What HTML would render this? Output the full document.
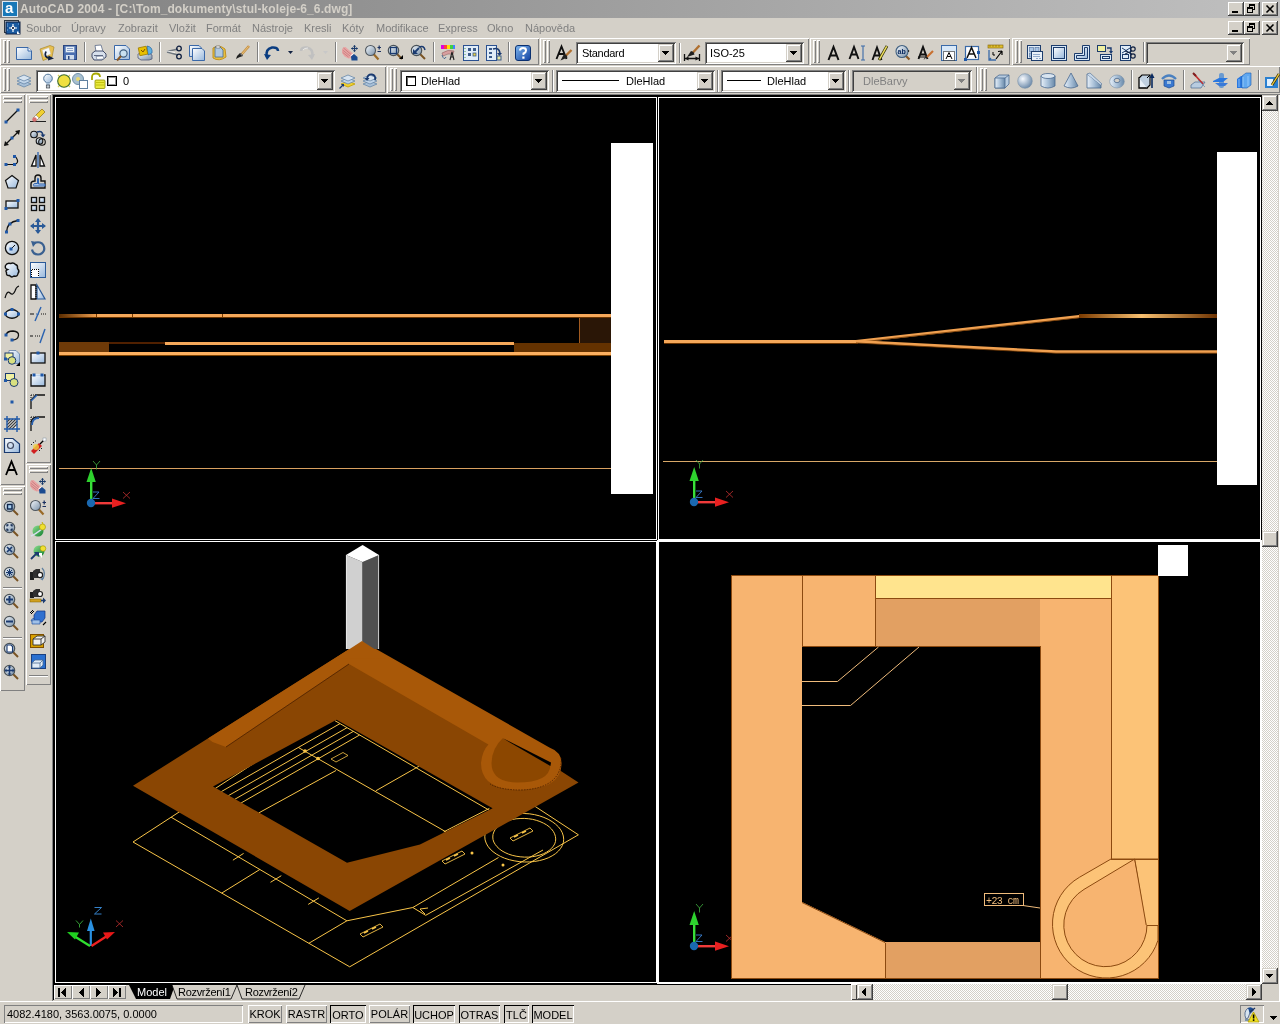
<!DOCTYPE html><html><head><meta charset="utf-8"><style>
*{margin:0;padding:0;box-sizing:border-box}
html,body{width:1280px;height:1024px;overflow:hidden;background:#d4d0c8;font-family:"Liberation Sans",sans-serif;font-size:11px;color:#000}
.a{position:absolute;will-change:transform}
svg{position:absolute;overflow:visible}
.cb{width:16px;height:14px;background:#d4d0c8;box-shadow:inset -1px -1px #404040,inset 1px 1px #fff,inset -2px -2px #808080,inset 2px 2px #d4d0c8}
.menu{top:22px;color:#808080;white-space:nowrap;line-height:13px}
.tb{background:#d4d0c8;box-shadow:inset 1px 1px #fff,inset -1px -1px #808080}
.grip{width:3px;box-shadow:inset 1px 1px #fff,inset -1px -1px #808080}
.sep{width:2px;box-shadow:inset 1px 0 #808080,inset -1px 0 #fff}
.hsep{height:2px;box-shadow:inset 0 1px #808080,inset 0 -1px #fff}
.combo{background:#fff;box-shadow:inset 1px 1px #808080,inset -1px -1px #fff,inset 2px 2px #404040,inset -2px -2px #d4d0c8;white-space:nowrap;overflow:hidden;line-height:20px}
.combo.dis{background:#d4d0c8;color:#808080}
.dd{width:16px;background:#d4d0c8;box-shadow:inset -1px -1px #404040,inset 1px 1px #d4d0c8,inset -2px -2px #808080,inset 2px 2px #fff}
.dd:after{content:"";position:absolute;left:4px;top:7px;border-left:4px solid transparent;border-right:4px solid transparent;border-top:4px solid #000}
.dd.dis:after{border-top-color:#808080}
.hgrip{height:3px;box-shadow:inset 1px 1px #fff,inset -1px -1px #808080}
.sbk{background-color:#fff;background-image:linear-gradient(45deg,#d4d0c8 25%,transparent 25%,transparent 75%,#d4d0c8 75%),linear-gradient(45deg,#d4d0c8 25%,transparent 25%,transparent 75%,#d4d0c8 75%);background-size:2px 2px;background-position:0 0,1px 1px}
.btn{background:#d4d0c8;box-shadow:inset -1px -1px #404040,inset 1px 1px #d4d0c8,inset -2px -2px #808080,inset 2px 2px #fff}
.sbtn{height:18px;top:1005px;text-align:center;line-height:18px;box-shadow:inset 1px 1px #fff,inset -1px -1px #808080;white-space:nowrap}
.sbtn.on{box-shadow:inset 1px 1px #000,inset -1px -1px #fff;line-height:20px}
</style></head><body><div class="a " style="left:0px;top:0px;width:1280px;height:18px;background:linear-gradient(to right,#808080,#c0c0c0)"></div>
<div class="a " style="left:2px;top:1px;width:16px;height:16px;background:#1878b8;border:1px solid #dfe8f0"></div>
<div class="a" style="left:5px;top:0px;color:#fff;font-weight:bold;font-size:15px;line-height:16px">a</div>
<div class="a" style="left:20px;top:2px;font-weight:bold;font-size:12px;letter-spacing:0.1px;color:#d4d0c8;white-space:nowrap;line-height:14px">AutoCAD 2004 - [C:\Tom_dokumenty\stul-koleje-6_6.dwg]</div>
<div class="a cb" style="left:1228px;top:2px;width:16px;height:14px;"></div><div class="a " style="left:1232px;top:11px;width:6px;height:2px;background:#000"></div><div class="a cb" style="left:1244px;top:2px;width:16px;height:14px;"></div><svg style="left:1244px;top:2px" width="16" height="14" shape-rendering="crispEdges"><path d="M5 2h6v2h-6zM10 4h1v4h-2v-1h1zM5 4h1v1h-1zM3 5h6v2h-6zM3 7h1v4h-1zM8 7h1v4h-1zM3 10h6v1h-6z" fill="#000"/></svg><div class="a cb" style="left:1262px;top:2px;width:16px;height:14px;"></div><svg style="left:1262px;top:2px" width="16" height="14"><path d="M4.5 3.5l7 7M11.5 3.5l-7 7" stroke="#000" stroke-width="1.6"/></svg>
<div class="a cb" style="left:1228px;top:21px;width:16px;height:14px;"></div><div class="a " style="left:1232px;top:30px;width:6px;height:2px;background:#000"></div><div class="a cb" style="left:1244px;top:21px;width:16px;height:14px;"></div><svg style="left:1244px;top:21px" width="16" height="14" shape-rendering="crispEdges"><path d="M5 2h6v2h-6zM10 4h1v4h-2v-1h1zM5 4h1v1h-1zM3 5h6v2h-6zM3 7h1v4h-1zM8 7h1v4h-1zM3 10h6v1h-6z" fill="#000"/></svg><div class="a cb" style="left:1262px;top:21px;width:16px;height:14px;"></div><svg style="left:1262px;top:21px" width="16" height="14"><path d="M4.5 3.5l7 7M11.5 3.5l-7 7" stroke="#000" stroke-width="1.6"/></svg>
<svg style="left:4px;top:20px" width="17" height="15"><rect x="0.5" y="0.5" width="14" height="12" fill="#d0d8e0" stroke="#303840"/><rect x="2" y="2" width="14" height="12" fill="#1a5aa0" stroke="#102040"/><path d="M9 4V12M5 8H13" stroke="#fff" stroke-width="1.2"/><circle cx="9" cy="8" r="1.6" fill="#102040" stroke="#fff"/><path d="M3 4h1M3 6h1M3 10h1M14 4h1M14 12h1" stroke="#80b0e0"/><path d="M13 11L16 14H13Z" fill="#fff"/></svg>
<div class="a menu" style="left:26px">Soubor</div>
<div class="a menu" style="left:71px">Úpravy</div>
<div class="a menu" style="left:118px">Zobrazit</div>
<div class="a menu" style="left:169px">Vložit</div>
<div class="a menu" style="left:206px">Formát</div>
<div class="a menu" style="left:252px">Nástroje</div>
<div class="a menu" style="left:304px">Kresli</div>
<div class="a menu" style="left:342px">Kóty</div>
<div class="a menu" style="left:376px">Modifikace</div>
<div class="a menu" style="left:438px">Express</div>
<div class="a menu" style="left:487px">Okno</div>
<div class="a menu" style="left:525px">Nápověda</div>
<div class="a " style="left:52px;top:94px;width:1228px;height:908px;background:#000;box-shadow:inset 1px 1px #808080,inset -1px -1px #fff,inset -2px -2px #d4d0c8"></div>
<div class="a tb" style="left:0px;top:38px;width:539px;height:27px;"></div><div class="a grip" style="left:3px;top:40px;width:3px;height:23px;"></div><div class="a grip" style="left:7px;top:40px;width:3px;height:23px;"></div>
<div class="a sep" style="left:84px;top:42px;width:2px;height:20px;"></div>
<div class="a sep" style="left:159px;top:42px;width:2px;height:20px;"></div>
<div class="a sep" style="left:257px;top:42px;width:2px;height:20px;"></div>
<div class="a sep" style="left:335px;top:42px;width:2px;height:20px;"></div>
<div class="a sep" style="left:433px;top:42px;width:2px;height:20px;"></div>
<div class="a sep" style="left:508px;top:42px;width:2px;height:20px;"></div>
<div class="a tb" style="left:540px;top:38px;width:269px;height:27px;"></div><div class="a grip" style="left:543px;top:40px;width:3px;height:23px;"></div><div class="a grip" style="left:547px;top:40px;width:3px;height:23px;"></div>
<div class="a combo" style="left:576px;top:42px;width:100px;height:22px;"></div><div class="a btn" style="left:658px;top:44px;width:16px;height:18px;"></div><svg style="left:662px;top:51px" width="7" height="4" shape-rendering="crispEdges"><path d="M0 0h7v1h-7zM1 1h5v1h-5zM2 2h3v1h-3zM3 3h1v1h-1z" fill="#000"/></svg>
<div class="a" style="left:582px;top:47px;white-space:nowrap;line-height:13px;letter-spacing:-0.3px">Standard</div>
<div class="a sep" style="left:679px;top:43px;width:2px;height:20px;"></div>
<div class="a combo" style="left:705px;top:42px;width:99px;height:22px;"></div><div class="a btn" style="left:786px;top:44px;width:16px;height:18px;"></div><svg style="left:790px;top:51px" width="7" height="4" shape-rendering="crispEdges"><path d="M0 0h7v1h-7zM1 1h5v1h-5zM2 2h3v1h-3zM3 3h1v1h-1z" fill="#000"/></svg>
<div class="a" style="left:710px;top:47px;white-space:nowrap;line-height:13px;">ISO-25</div>
<div class="a tb" style="left:810px;top:38px;width:200px;height:27px;"></div><div class="a grip" style="left:813px;top:40px;width:3px;height:23px;"></div><div class="a grip" style="left:817px;top:40px;width:3px;height:23px;"></div>
<div class="a tb" style="left:1012px;top:38px;width:238px;height:27px;"></div><div class="a grip" style="left:1015px;top:40px;width:3px;height:23px;"></div><div class="a grip" style="left:1019px;top:40px;width:3px;height:23px;"></div>
<div class="a sep" style="left:1143px;top:42px;width:2px;height:20px;"></div>
<div class="a combo dis" style="left:1146px;top:42px;width:98px;height:22px;"></div><div class="a btn" style="left:1226px;top:44px;width:16px;height:18px;"></div><svg style="left:1230px;top:51px" width="7" height="4" shape-rendering="crispEdges"><path d="M0 0h7v1h-7zM1 1h5v1h-5zM2 2h3v1h-3zM3 3h1v1h-1z" fill="#808080"/></svg>
<div class="a tb" style="left:0px;top:66px;width:386px;height:27px;"></div><div class="a grip" style="left:3px;top:68px;width:3px;height:23px;"></div><div class="a grip" style="left:7px;top:68px;width:3px;height:23px;"></div>
<div class="a combo" style="left:36px;top:70px;width:299px;height:22px;"></div><div class="a btn" style="left:317px;top:72px;width:16px;height:18px;"></div><svg style="left:321px;top:79px" width="7" height="4" shape-rendering="crispEdges"><path d="M0 0h7v1h-7zM1 1h5v1h-5zM2 2h3v1h-3zM3 3h1v1h-1z" fill="#000"/></svg>
<div class="a" style="left:123px;top:75px;white-space:nowrap;line-height:13px;">0</div>
<div class="a tb" style="left:387px;top:66px;width:590px;height:27px;"></div><div class="a grip" style="left:390px;top:68px;width:3px;height:23px;"></div><div class="a grip" style="left:394px;top:68px;width:3px;height:23px;"></div>
<div class="a combo" style="left:400px;top:70px;width:149px;height:22px;"></div><div class="a btn" style="left:531px;top:72px;width:16px;height:18px;"></div><svg style="left:535px;top:79px" width="7" height="4" shape-rendering="crispEdges"><path d="M0 0h7v1h-7zM1 1h5v1h-5zM2 2h3v1h-3zM3 3h1v1h-1z" fill="#000"/></svg>
<svg style="left:406px;top:76px" width="10" height="10" shape-rendering="crispEdges"><rect x="0.5" y="0.5" width="9" height="9" fill="#fff" stroke="#000"/><rect x="1" y="1" width="8" height="8" fill="none" stroke="#000" stroke-width="0.6"/></svg>
<div class="a" style="left:421px;top:75px;white-space:nowrap;line-height:13px;">DleHlad</div>
<div class="a sep" style="left:552px;top:70px;width:2px;height:22px;"></div>
<div class="a combo" style="left:556px;top:70px;width:159px;height:22px;"></div><div class="a btn" style="left:697px;top:72px;width:16px;height:18px;"></div><svg style="left:701px;top:79px" width="7" height="4" shape-rendering="crispEdges"><path d="M0 0h7v1h-7zM1 1h5v1h-5zM2 2h3v1h-3zM3 3h1v1h-1z" fill="#000"/></svg>
<div class="a " style="left:562px;top:80px;width:57px;height:1px;background:#000"></div>
<div class="a" style="left:626px;top:75px;white-space:nowrap;line-height:13px;">DleHlad</div>
<div class="a sep" style="left:717px;top:70px;width:2px;height:22px;"></div>
<div class="a combo" style="left:721px;top:70px;width:125px;height:22px;"></div><div class="a btn" style="left:828px;top:72px;width:16px;height:18px;"></div><svg style="left:832px;top:79px" width="7" height="4" shape-rendering="crispEdges"><path d="M0 0h7v1h-7zM1 1h5v1h-5zM2 2h3v1h-3zM3 3h1v1h-1z" fill="#000"/></svg>
<div class="a " style="left:727px;top:80px;width:34px;height:1px;background:#000"></div>
<div class="a" style="left:767px;top:75px;white-space:nowrap;line-height:13px;">DleHlad</div>
<div class="a sep" style="left:848px;top:70px;width:2px;height:22px;"></div>
<div class="a combo dis" style="left:852px;top:70px;width:120px;height:22px;"></div><div class="a btn" style="left:954px;top:72px;width:16px;height:18px;"></div><svg style="left:958px;top:79px" width="7" height="4" shape-rendering="crispEdges"><path d="M0 0h7v1h-7zM1 1h5v1h-5zM2 2h3v1h-3zM3 3h1v1h-1z" fill="#808080"/></svg>
<div class="a" style="left:863px;top:75px;white-space:nowrap;line-height:13px;color:#808080">DleBarvy</div>
<div class="a tb" style="left:977px;top:66px;width:303px;height:27px;"></div><div class="a grip" style="left:980px;top:68px;width:3px;height:23px;"></div><div class="a grip" style="left:984px;top:68px;width:3px;height:23px;"></div>
<div class="a sep" style="left:1131px;top:70px;width:2px;height:20px;"></div>
<div class="a sep" style="left:1183px;top:70px;width:2px;height:20px;"></div>
<div class="a sep" style="left:1258px;top:70px;width:2px;height:20px;"></div>
<div class="a tb" style="left:0px;top:94px;width:25px;height:391px;"></div><div class="a hgrip" style="left:3px;top:96px;width:19px;height:3px;"></div><div class="a hgrip" style="left:3px;top:100px;width:19px;height:3px;"></div>
<div class="a tb" style="left:0px;top:486px;width:25px;height:205px;"></div><div class="a hgrip" style="left:3px;top:488px;width:19px;height:3px;"></div><div class="a hgrip" style="left:3px;top:492px;width:19px;height:3px;"></div>
<div class="a hsep" style="left:3px;top:587px;width:19px;height:2px;"></div>
<div class="a hsep" style="left:3px;top:637px;width:19px;height:2px;"></div>
<div class="a tb" style="left:26px;top:94px;width:25px;height:369px;"></div><div class="a hgrip" style="left:29px;top:96px;width:19px;height:3px;"></div><div class="a hgrip" style="left:29px;top:100px;width:19px;height:3px;"></div>
<div class="a tb" style="left:26px;top:464px;width:25px;height:221px;"></div><div class="a hgrip" style="left:29px;top:466px;width:19px;height:3px;"></div><div class="a hgrip" style="left:29px;top:470px;width:19px;height:3px;"></div>
<div class="a hsep" style="left:29px;top:675px;width:19px;height:2px;"></div>
<div class="a " style="left:54px;top:984px;width:797px;height:16px;background:#d4d0c8;border-top:1px solid #000"></div>
<div class="a btn2" style="left:54px;top:985px;width:18px;height:14px;background:#d4d0c8;box-shadow:inset 1px 1px #fff,inset -1px -1px #808080"></div>
<div class="a btn2" style="left:72px;top:985px;width:18px;height:14px;background:#d4d0c8;box-shadow:inset 1px 1px #fff,inset -1px -1px #808080"></div>
<div class="a btn2" style="left:90px;top:985px;width:18px;height:14px;background:#d4d0c8;box-shadow:inset 1px 1px #fff,inset -1px -1px #808080"></div>
<div class="a btn2" style="left:108px;top:985px;width:18px;height:14px;background:#d4d0c8;box-shadow:inset 1px 1px #fff,inset -1px -1px #808080"></div>
<svg style="left:54px;top:985px" width="80" height="14" shape-rendering="crispEdges"><path d="M4 3h2v9h-2zM7 7h1v1h-1zM8 6h1v3h-1zM9 5h1v5h-1zM10 4h1v7h-1zM11 3h1v9h-1z" fill="#000"/><path d="M25 7h1v1h-1zM26 6h1v3h-1zM27 5h1v5h-1zM28 4h1v7h-1zM29 3h1v9h-1z" fill="#000"/><path d="M42 3h1v9h-1zM43 4h1v7h-1zM44 5h1v5h-1zM45 6h1v3h-1zM46 7h1v1h-1z" fill="#000"/><path d="M59 3h1v9h-1zM60 4h1v7h-1zM61 5h1v5h-1zM62 6h1v3h-1zM63 7h1v1h-1zM65 3h2v9h-2z" fill="#000"/></svg>
<svg style="left:0;top:984px" width="360" height="17"><path d="M129 1 L136 15 L170 15 L175 1Z" fill="#000"/><path d="M172 1 L177 15 L231 15 L237 1" fill="#d4d0c8" stroke="#000" stroke-width="0.8"/><path d="M237 1 L242 15 L299 15 L305 1" fill="#d4d0c8" stroke="#000" stroke-width="0.8"/></svg>
<div class="a" style="left:137px;top:985px;white-space:nowrap;line-height:13px;color:#fff;line-height:14px">Model</div>
<div class="a" style="left:178px;top:985px;white-space:nowrap;line-height:13px;line-height:14px;letter-spacing:-0.3px">Rozvržení1</div>
<div class="a" style="left:245px;top:985px;white-space:nowrap;line-height:13px;line-height:14px;letter-spacing:-0.3px">Rozvržení2</div>
<div class="a " style="left:851px;top:984px;width:6px;height:16px;background:#d4d0c8;box-shadow:inset 1px 1px #fff,inset -1px -1px #404040"></div>
<div class="a sbk" style="left:857px;top:984px;width:405px;height:16px;"></div>
<div class="a btn" style="left:857px;top:984px;width:16px;height:16px;"></div>
<svg style="left:862px;top:988px" width="5" height="8" shape-rendering="crispEdges"><path d="M3 0h1v8h-1zM2 1h1v6h-1zM1 2h1v4h-1zM0 3h1v2h-1z" fill="#000"/></svg>
<div class="a btn" style="left:1052px;top:984px;width:16px;height:16px;"></div>
<div class="a btn" style="left:1246px;top:984px;width:16px;height:16px;"></div>
<svg style="left:1252px;top:988px" width="5" height="8" shape-rendering="crispEdges"><path d="M0 0h1v8h-1zM1 1h1v6h-1zM2 2h1v4h-1zM3 3h1v2h-1z" fill="#000"/></svg>
<div class="a sbk" style="left:1262px;top:95px;width:16px;height:889px;"></div>
<div class="a btn" style="left:1262px;top:95px;width:16px;height:16px;"></div>
<svg style="left:1266px;top:101px" width="8" height="4" shape-rendering="crispEdges"><path d="M3 0h1v1h-1zM2 1h3v1h-3zM1 2h5v1h-5zM0 3h7v1h-7z" fill="#000"/></svg>
<div class="a btn" style="left:1262px;top:531px;width:16px;height:16px;"></div>
<div class="a btn" style="left:1262px;top:968px;width:16px;height:16px;"></div>
<svg style="left:1266px;top:974px" width="7" height="4" shape-rendering="crispEdges"><path d="M0 0h7v1h-7zM1 1h5v1h-5zM2 2h3v1h-3zM3 3h1v1h-1z" fill="#000"/></svg>
<div class="a " style="left:1262px;top:984px;width:16px;height:16px;background:#d4d0c8"></div>
<div class="a " style="left:0px;top:1001px;width:1280px;height:23px;background:#d4d0c8;border-top:1px solid #fff"></div>
<div class="a " style="left:4px;top:1005px;width:239px;height:18px;box-shadow:inset 1px 1px #808080,inset -1px -1px #fff"></div>
<div class="a" style="left:7px;top:1008px;white-space:nowrap;line-height:13px;">4082.4180, 3563.0075, 0.0000</div>
<div class="a sbtn" style="left:248px;top:1005px;width:34px;height:18px;">KROK</div>
<div class="a sbtn" style="left:286px;top:1005px;width:41px;height:18px;">RASTR</div>
<div class="a sbtn on" style="left:330px;top:1005px;width:36px;height:18px;">ORTO</div>
<div class="a sbtn" style="left:369px;top:1005px;width:41px;height:18px;">POLÁR</div>
<div class="a sbtn on" style="left:413px;top:1005px;width:42px;height:18px;">UCHOP</div>
<div class="a sbtn on" style="left:459px;top:1005px;width:41px;height:18px;">OTRAS</div>
<div class="a sbtn on" style="left:504px;top:1005px;width:25px;height:18px;">TLČ</div>
<div class="a sbtn on" style="left:532px;top:1005px;width:42px;height:18px;">MODEL</div>
<div class="a " style="left:1240px;top:1005px;width:24px;height:18px;box-shadow:inset 1px 1px #808080,inset -1px -1px #fff"></div>
<svg style="left:1243px;top:1006px" width="18" height="16"><path d="M3 13Q0 6 5 2L8 4L5 12Z" fill="#d8e4f0" stroke="#405880" stroke-width="0.8"/><path d="M5 2Q9 0 11 4L7 8Z" fill="#1a4a90"/><path d="M7 6L12 2" stroke="#1a3060" stroke-width="1.2"/><path d="M2 14H7" stroke="#6080a0" stroke-width="1.5"/><path d="M10.5 6L16 16H5Z" fill="#f0e020" stroke="#b0a000" stroke-width="0.8"/><rect x="9.8" y="8.5" width="1.6" height="4" fill="#000"/><rect x="9.8" y="13.3" width="1.6" height="1.6" fill="#000"/></svg>
<svg style="left:1270px;top:1016px" width="7" height="4" shape-rendering="crispEdges"><path d="M0 0h7v1h-7zM1 1h5v1h-5zM2 2h3v1h-3zM3 3h1v1h-1z" fill="#000"/></svg>
<svg style="left:0;top:0" width="0" height="0"><defs>
<linearGradient id="lf" x1="0" y1="0" x2="1" y2="1"><stop offset="0" stop-color="#ffffff"/><stop offset="1" stop-color="#98b8dc"/></linearGradient>
<linearGradient id="mg" x1="0" y1="0" x2="1" y2="1"><stop offset="0" stop-color="#f4f8fc"/><stop offset="1" stop-color="#7890a8"/></linearGradient>
<linearGradient id="yl" x1="0" y1="0" x2="1" y2="1"><stop offset="0" stop-color="#fff6a0"/><stop offset="1" stop-color="#d8a800"/></linearGradient>
<linearGradient id="gr" x1="0" y1="0" x2="1" y2="1"><stop offset="0" stop-color="#90e090"/><stop offset="1" stop-color="#108030"/></linearGradient>
<linearGradient id="sb" x1="0" y1="0" x2="1" y2="0"><stop offset="0" stop-color="#e8f0f8"/><stop offset="0.5" stop-color="#a8c0d8"/><stop offset="1" stop-color="#6888a8"/></linearGradient>
<linearGradient id="db" x1="0" y1="0" x2="1" y2="1"><stop offset="0" stop-color="#80b8f0"/><stop offset="1" stop-color="#1040a0"/></linearGradient>
</defs></svg>
<svg style="left:16px;top:45px" width="16" height="16"><path d="M0.5 2.5H12L15.5 6V14.5H0.5Z" fill="url(#lf)" stroke="#3a68a8"/><path d="M12 2.5V6H15.5" fill="#fff" stroke="#3a68a8"/></svg>
<svg style="left:39px;top:45px" width="16" height="16"><path d="M1 4L11 0.5L15 2L13 12L4 15.5Z" fill="#e8c050" stroke="#a88830" stroke-width="0.7"/><path d="M3 5L10 2.5L12 9L5 12Z" fill="#f4f8fc" stroke="#c8b080" stroke-width="0.5"/><path d="M7 6.5Q4.5 12 10 13" stroke="#102040" stroke-width="1.8" fill="none"/><path d="M9.5 10.5L15 13.5L9 15.5Z" fill="#102040"/></svg>
<svg style="left:62px;top:45px" width="16" height="16"><rect x="1.5" y="0.5" width="13" height="14" fill="#4a6eb0" stroke="#2a4680"/><rect x="3.5" y="1.5" width="9" height="6" fill="#e8f0f8" stroke="#6a88b8" stroke-width="0.6"/><path d="M5 3.5h6M5 5.5h6" stroke="#8aa0c8"/><rect x="4" y="10" width="8" height="4.5" fill="#d0dcec"/><rect x="6" y="11" width="1.5" height="3.5" fill="#2a4680"/></svg>
<svg style="left:91px;top:45px" width="16" height="16"><path d="M4 0.5L10 0L12 6.5H5Z" fill="#fff" stroke="#5a6a88" stroke-width="0.8"/><path d="M1 8.5L4 6H12L15 9V12L11 15H3L1 12Z" fill="#d8e0ec" stroke="#404a68"/><path d="M3 10.5H12" stroke="#404a68" stroke-width="0.8"/><path d="M5 11.5L12 11L13 14L6 14.5Z" fill="#fff" stroke="#5a6a88" stroke-width="0.6"/></svg>
<svg style="left:114px;top:45px" width="16" height="16"><path d="M0.5 0.5H12L15.5 4V14.5H0.5Z" fill="url(#lf)" stroke="#3a68a8"/><circle cx="9.5" cy="8.5" r="3.6" fill="#c8e0f0" stroke="#406080" stroke-width="1.2"/><path d="M7 11L3 15.5" stroke="#8a5a28" stroke-width="2"/></svg>
<svg style="left:137px;top:45px" width="16" height="16"><path d="M1 9L5 8H12L15 10V14L12 15H4L1 13Z" fill="url(#mg)" stroke="#505878" stroke-width="0.8"/><path d="M10 1Q16 2 15 8L11 10Z" fill="#60b0e0" stroke="#2060a0" stroke-width="0.7"/><rect x="2" y="2" width="8" height="8" fill="#e8c000" stroke="#a08000" stroke-width="0.8" transform="rotate(-12 6 6)"/><path d="M4 5l2 2l2 -3" stroke="#805000" fill="none"/></svg>
<svg style="left:166px;top:45px" width="16" height="16"><path d="M1 7L12 10M1 6.5L12 4" stroke="#707880" stroke-width="1.6"/><path d="M1 6L9 7.5" stroke="#fff" stroke-width="0.8"/><circle cx="13" cy="3.5" r="2.3" fill="none" stroke="#102040" stroke-width="1.3"/><circle cx="13" cy="11.5" r="2.3" fill="none" stroke="#102040" stroke-width="1.3"/></svg>
<svg style="left:189px;top:45px" width="16" height="16"><path d="M0.5 0.5H10L12.5 3V11.5H0.5Z" fill="url(#lf)" stroke="#3a68a8"/><path d="M3.5 3.5H13L15.5 6V15.5H3.5Z" fill="url(#lf)" stroke="#3a68a8"/></svg>
<svg style="left:211px;top:45px" width="16" height="16"><path d="M2 3Q8 -1 14 4L15 12Q8 17 2 13Z" fill="#e8c040" stroke="#c09020"/><path d="M4 2H9L12 5V12H4Z" fill="#b0c8e0" stroke="#4a6a90" stroke-width="0.8"/><path d="M5 1h4v2h-4z" fill="#fff" stroke="#606060" stroke-width="0.6"/></svg>
<svg style="left:234px;top:45px" width="16" height="16"><path d="M15 1L7 10" stroke="#c89040" stroke-width="2.6"/><path d="M14.5 1.5L8 9" stroke="#f0d090" stroke-width="0.8"/><path d="M8 9L6 8Q3 10 2 14Q5 12 9 11Z" fill="#202020"/><path d="M6.5 8.5L8.5 10.5" stroke="#808080" stroke-width="1.3"/></svg>
<svg style="left:264px;top:45px" width="16" height="16"><path d="M3 12Q1 4 8 2.5Q14 2 14 6" stroke="#0a3c80" stroke-width="2.6" fill="none"/><path d="M0 9L3 15L7 10Z" fill="#0a3c80"/></svg>
<svg style="left:285px;top:45px" width="16" height="16"><path d="M3 6h5l-2.5 3z" fill="#102040"/></svg>
<svg style="left:299px;top:45px" width="16" height="16"><path d="M13 12Q15 4 8 2.5Q2 2 2 6" stroke="#c0c0c0" stroke-width="2.6" fill="none"/><path d="M16 9L13 15L9 10Z" fill="#c0c0c0"/><path d="M4 5Q5 3 9 3" stroke="#e8e8e8" fill="none"/></svg>
<svg style="left:320px;top:45px" width="16" height="16"><path d="M3 6h5l-2.5 3z" fill="#c8c8c8"/></svg>
<svg style="left:342px;top:45px" width="16" height="16"><path d="M0 4.5Q0.5 1.5 3.5 2L11 8.5L10 13L6.5 13.5Q2 12 0 8Z" fill="#e8a4a4"/><path d="M1.5 3L9 9.5M0.8 5.2L8 11M0.8 7.5L6.5 12" stroke="#c47878" stroke-width="0.8"/><path d="M9 11.5L12 9L15.5 12V15.5H9.5Z" fill="#1a4a90"/><path d="M8.5 11L11.5 8.5" stroke="#fff" stroke-width="1"/><path d="M12.5 0.5V6.5M9.5 3.5H15.5" stroke="#1a3a6a" stroke-width="1.2"/><path d="M11 1.8L12.5 0L14 1.8ZM11 5.2L12.5 7L14 5.2ZM10.8 2L9 3.5L10.8 5ZM14.2 2L16 3.5L14.2 5Z" fill="#1a3a6a"/></svg>
<svg style="left:365px;top:45px" width="16" height="16"><path d="M8.5 9L13.5 14.5" stroke="#9a6a28" stroke-width="2.2"/><circle cx="5.5" cy="5.5" r="5" fill="url(#mg)" stroke="#505860" stroke-width="1.1"/><path d="M12.5 2.5H16M14.2 0.5V4.5M12.5 6.5H16" stroke="#1a3060" stroke-width="1.2"/></svg>
<svg style="left:388px;top:45px" width="16" height="16"><path d="M9 9L14 14" stroke="#7a5424" stroke-width="2"/><circle cx="5.5" cy="5.5" r="5.2" fill="url(#mg)" stroke="#4a5258" stroke-width="1.2"/><g transform="translate(-1,-1)"><rect x="3.5" y="3.5" width="6" height="6" fill="none" stroke="#1a3a70" stroke-width="1.2"/><path d="M12 15h4v-4z" fill="#000"/></g></svg>
<svg style="left:411px;top:45px" width="16" height="16"><path d="M9 9L14 14" stroke="#7a5424" stroke-width="2"/><circle cx="5.5" cy="5.5" r="5.2" fill="url(#mg)" stroke="#4a5258" stroke-width="1.2"/><g transform="translate(-1,-1)"><path d="M9 4L4 9" stroke="#1a3a70" stroke-width="1.8"/><path d="M3 5V10H8Z" fill="#1a3a70"/><path d="M9 3Q14 1 15 6" stroke="#1a3a70" stroke-width="1.5" fill="none"/></g></svg>
<svg style="left:440px;top:45px" width="16" height="16"><rect x="1" y="0" width="14" height="4" fill="url(#rb)"/><path d="M1 0h3v4h-3z" fill="#e000e0"/><path d="M4 0h3v4h-3z" fill="#ff4040"/><path d="M7 0h3v4h-3z" fill="#ffe000"/><path d="M10 0h3v4h-3z" fill="#40d040"/><path d="M13 0h2v4h-2z" fill="#4080ff"/><path d="M2 8Q8 4 14 6L13 9Q8 8 3 11Z" fill="#d8a0a0" stroke="#906060" stroke-width="0.6"/><path d="M2 10Q4 16 6 12" stroke="#4a6a90" fill="none"/><path d="M10 15L12 7L14 15M11 12H13" stroke="#202020" fill="none" stroke-width="1.1"/></svg>
<svg style="left:463px;top:45px" width="16" height="16"><rect x="0.5" y="0.5" width="15" height="15" fill="#e0ecf8" stroke="#2a5090"/><path d="M2 3v1M2 6v1M2 9v1M2 12v1" stroke="#50a050"/><rect x="5" y="3" width="3" height="3" fill="#3a5a8a"/><rect x="10" y="3" width="3" height="3" fill="#3a5a8a"/><rect x="5" y="8" width="3" height="3" fill="#3a5a8a"/><rect x="10" y="8" width="3" height="3" fill="#e8d040" stroke="#3a5a8a" stroke-width="0.8"/></svg>
<svg style="left:486px;top:45px" width="16" height="16"><rect x="0.5" y="0.5" width="10" height="15" fill="#e0ecf8" stroke="#2a5090"/><path d="M3 3h3v2h-3zM3 7h3v2h-3zM3 11h3v2h-3z" fill="#3a5a8a"/><path d="M7 4Q13 2 14 8" stroke="#1a3a70" stroke-width="1.6" fill="none"/><path d="M11 8h5l-2.5 3z" fill="#1a3a70"/><rect x="11" y="11" width="4" height="4" fill="#e8e8a0" stroke="#3a5a8a"/></svg>
<svg style="left:515px;top:45px" width="16" height="16"><rect x="0.5" y="0.5" width="15" height="15" rx="2.5" fill="url(#db)" stroke="#0a3070"/><path d="M5 5.5Q5 3 8 3Q11 3 11 5.5Q11 7.5 8.5 8.5V10" stroke="#fff" stroke-width="2" fill="none"/><rect x="7.3" y="11.5" width="2.2" height="2.2" fill="#fff"/></svg>
<svg style="left:556px;top:45px" width="16" height="16"><path d="M0.5 14L5.5 1.5L10.5 14M2.5 9H8.5" stroke="#101010" stroke-width="1.9" fill="none"/><path d="M15.5 5L10 10.5" stroke="#b07030" stroke-width="2.4"/><path d="M10.5 10L8 9L4.5 15.5L11.5 12.5Z" fill="#202020"/></svg>
<svg style="left:684px;top:45px" width="16" height="16"><path d="M0.5 9V16M15.5 9V16M1 13.5H15" stroke="#101010" stroke-width="1.3"/><path d="M1 13.5L4.5 11.5V15.5ZM15 13.5L11.5 11.5V15.5Z" fill="#101010"/><path d="M15.5 0.5L9 7.5" stroke="#b07030" stroke-width="2.4"/><path d="M9.5 7L7 6L3 12L10.5 9.5Z" fill="#202020"/></svg>
<svg style="left:826px;top:45px" width="16" height="16"><path d="M2.5 15L7.5 2L12.5 15M4.5 10.5H10.5" stroke="#101010" stroke-width="2" fill="none"/></svg>
<svg style="left:849px;top:45px" width="16" height="16"><path d="M0.5 14L5 2L9.5 14M2.5 9.5H7.5" stroke="#101010" stroke-width="1.9" fill="none"/><path d="M12 1H16M12 15H16M14 1V15" stroke="#3a6aa8" stroke-width="1.1"/></svg>
<svg style="left:872px;top:45px" width="16" height="16"><path d="M0.5 15L5 2.5L9.5 15M2.5 10.5H7.5" stroke="#101010" stroke-width="1.9" fill="none"/><path d="M15 1L7 15" stroke="#303000" stroke-width="2.8"/><path d="M14.7 1.3L7.4 14.5" stroke="#f0e060" stroke-width="1.5"/></svg>
<svg style="left:895px;top:45px" width="16" height="16"><path d="M10 10L14.5 14.5" stroke="#8a5a28" stroke-width="2.2"/><circle cx="7" cy="6.5" r="6" fill="url(#mg)" stroke="#406080" stroke-width="1.1"/><text x="2.5" y="9" font-family="Liberation Sans" font-size="7" fill="#0a2a60" font-weight="bold">ab</text><path d="M14 5Q12.5 6 14 7" stroke="#202020" fill="none"/></svg>
<svg style="left:918px;top:45px" width="16" height="16"><path d="M0.5 14L5 2L9.5 14M2.5 9.5H7.5" stroke="#101010" stroke-width="1.9" fill="none"/><path d="M0 12H8" stroke="#101010"/><path d="M15 6L9 12" stroke="#c87030" stroke-width="2.2"/><path d="M9 12L5.5 15L7.5 11Z" fill="#303030"/></svg>
<svg style="left:941px;top:45px" width="16" height="16"><rect x="0.5" y="0.5" width="15" height="15" fill="#d8e8f8" stroke="#3a6aa8"/><rect x="2.5" y="6.5" width="11" height="9" fill="#fff" stroke="#000" stroke-dasharray="1 1"/><path d="M5 14L8 7.5L11 14M6.2 11.5H9.8" stroke="#000" fill="none"/></svg>
<svg style="left:964px;top:45px" width="16" height="16"><rect x="1.5" y="1.5" width="13" height="13" fill="#fff" stroke="#3a6aa8" stroke-width="1.2"/><path d="M3 13L7.5 2.5L12 13M5 9H10" stroke="#101010" stroke-width="1.5" fill="none"/><rect x="13" y="6" width="3" height="3" fill="#1f58a8"/><rect x="0" y="13" width="3" height="3" fill="#1f58a8"/></svg>
<svg style="left:987px;top:45px" width="16" height="16"><rect x="1" y="0" width="15" height="3" fill="#e0c030" stroke="#806000" stroke-width="0.6"/><path d="M3 0v2M6 0v2M9 0v2M12 0v2" stroke="#806000" stroke-width="0.6"/><path d="M2 5V15H9M2 15L4 13" stroke="#3a6aa8" stroke-width="1.3" fill="none"/><path d="M6 7V10H8" stroke="#000" fill="none"/><path d="M9 14L15 6M15 6L15 10M15 6L11 6.5" stroke="#000" stroke-width="1.2" fill="none"/></svg>
<svg style="left:1027px;top:45px" width="16" height="16"><rect x="0.5" y="0.5" width="13" height="13" fill="#e0ecf8" stroke="#1c3c6c"/><rect x="2.5" y="2.5" width="4" height="4" fill="#a8c4e4" stroke="#4a6a98" stroke-width="0.6"/><rect x="8" y="2.5" width="4" height="4" fill="#a8c4e4" stroke="#4a6a98" stroke-width="0.6"/><rect x="2.5" y="8" width="4" height="4" fill="#a8c4e4" stroke="#4a6a98" stroke-width="0.6"/><rect x="4.5" y="6.5" width="11" height="9" fill="#e8f0f8" stroke="#1c3c6c"/><path d="M6 9.5h7M6 11.5h7M9 13.5h2M12 13.5h2" stroke="#7a98c0" stroke-width="0.8"/></svg>
<svg style="left:1051px;top:45px" width="16" height="16"><rect x="0.5" y="0.5" width="15" height="15" fill="#d8e8f8" stroke="#1c3c6c"/><rect x="2.5" y="2.5" width="11" height="11" fill="url(#lf)" stroke="#1c3c6c"/></svg>
<svg style="left:1074px;top:45px" width="16" height="16"><path d="M8.5 0.5H15.5V15.5H0.5V8.5H8.5Z" fill="#d8e8f8" stroke="#1c3c6c"/><path d="M10.5 2.5H13.5V13.5H2.5V10.5H10.5Z" fill="url(#lf)" stroke="#1c3c6c"/></svg>
<svg style="left:1097px;top:45px" width="16" height="16"><rect x="0.5" y="0.5" width="8" height="6" fill="#f0f0a0" stroke="#1c3c6c"/><rect x="3.5" y="9.5" width="11" height="6" fill="#e0ecf8" stroke="#1c3c6c"/><rect x="5.5" y="11.5" width="7" height="2" fill="none" stroke="#1c3c6c"/><path d="M10 3H14V7" stroke="#1a3a70" stroke-width="1.4" fill="none"/><path d="M12 6h4l-2 3z" fill="#1a3a70"/></svg>
<svg style="left:1120px;top:45px" width="16" height="16"><rect x="0.5" y="0.5" width="10" height="15" fill="#e0ecf8" stroke="#1c3c6c"/><rect x="2.5" y="9.5" width="6" height="4" fill="none" stroke="#1c3c6c"/><path d="M2 3L10 8M2 8L10 3" stroke="#1c3c6c"/><circle cx="13" cy="4" r="2.2" fill="none" stroke="#102040" stroke-width="1.2"/><circle cx="13" cy="11" r="2.2" fill="none" stroke="#102040" stroke-width="1.2"/><path d="M5 6L12 9M5 9L12 6" stroke="#102040"/></svg>
<svg style="left:16px;top:73px" width="16" height="16"><path d="M1 11L8 14L15 11L8 8Z" fill="#a8c0d8" stroke="#6888a8" stroke-width="0.8"/><path d="M1 8L8 11L15 8L8 5Z" fill="#c0d4e8" stroke="#6888a8" stroke-width="0.8"/><path d="M1 5L8 8L15 5L8 2Z" fill="#d8e4f0" stroke="#6888a8" stroke-width="0.8"/></svg>
<svg style="left:339px;top:73px" width="16" height="16"><path d="M2 11L9 14L16 11L9 8Z" fill="#f0d030" stroke="#c0a000" stroke-width="0.8"/><path d="M2 8L9 11L16 8L9 5Z" fill="#c0d4e8" stroke="#6888a8" stroke-width="0.8"/><path d="M2 5L9 8L16 5L9 2Z" fill="#d8e4f0" stroke="#6888a8" stroke-width="0.8"/><path d="M0.5 15.5L4 12" stroke="#1a3a70" stroke-width="1.3"/><path d="M2 11H5V14Z" fill="#1a3a70"/></svg>
<svg style="left:362px;top:73px" width="16" height="16"><path d="M1 11L8 14L15 11L8 8Z" fill="#a8c0d8" stroke="#6888a8" stroke-width="0.8"/><path d="M1 8L8 11L15 8L8 5Z" fill="#c0d4e8" stroke="#6888a8" stroke-width="0.8"/><path d="M1 5L8 8L15 5L8 2Z" fill="#d8e4f0" stroke="#6888a8" stroke-width="0.8"/><path d="M5 7Q5 1 10 1.5Q14 2 13 7" stroke="#1a3a70" stroke-width="1.8" fill="none"/><path d="M2.5 5H7.5L5 8Z" fill="#1a3a70"/></svg>
<svg style="left:994px;top:73px" width="16" height="16"><path d="M1 5L5 2H15V11L11 15H1Z" fill="#b8cce0" stroke="#4a6a90" stroke-width="0.8"/><path d="M1 5H11V15H1Z" fill="url(#sb)" stroke="#4a6a90" stroke-width="0.8"/><path d="M11 5L15 2" stroke="#4a6a90" stroke-width="0.8"/></svg>
<svg style="left:1017px;top:73px" width="16" height="16"><radialGradient id="sph" cx="0.35" cy="0.35" r="0.7"><stop offset="0" stop-color="#f8fbff"/><stop offset="1" stop-color="#6a88a8"/></radialGradient><circle cx="8" cy="8" r="7.3" fill="url(#sph)" stroke="#7890a8" stroke-width="0.6"/></svg>
<svg style="left:1040px;top:73px" width="16" height="16"><path d="M1 3V13Q8 17 15 13V3" fill="url(#sb)" stroke="#4a6a90" stroke-width="0.8"/><ellipse cx="8" cy="3" rx="7" ry="2.5" fill="#d8e4f0" stroke="#4a6a90" stroke-width="0.8"/></svg>
<svg style="left:1063px;top:73px" width="16" height="16"><path d="M8 0L1 13Q8 17 15 13Z" fill="url(#sb)" stroke="#4a6a90" stroke-width="0.8"/></svg>
<svg style="left:1086px;top:73px" width="16" height="16"><path d="M1 1L15 12V15H1Z" fill="url(#sb)" stroke="#4a6a90" stroke-width="0.8"/><path d="M1 1L4 0L16 11L15 12" fill="#c8d8e8" stroke="#4a6a90" stroke-width="0.6"/></svg>
<svg style="left:1109px;top:73px" width="16" height="16"><ellipse cx="8" cy="8.5" rx="7.3" ry="6.5" fill="url(#sb)" stroke="#7890a8" stroke-width="0.6"/><ellipse cx="8" cy="7.5" rx="2.8" ry="2.2" fill="#d4d0c8" stroke="#4a6a90" stroke-width="0.8"/></svg>
<svg style="left:1138px;top:73px" width="16" height="16"><path d="M1 5H9V15H1Z" fill="#e8f0f8" stroke="#000" stroke-width="1.3"/><path d="M1 5L4 2H12V12L9 15" fill="#c0d0e0" stroke="#000" stroke-width="1.1"/><path d="M9 5L12 2" stroke="#000"/><path d="M14 15V3" stroke="#0a2a60" stroke-width="1.6"/><path d="M11.5 5L14 0L16.5 5Z" fill="#0a2a60"/></svg>
<svg style="left:1161px;top:73px" width="16" height="16"><path d="M1 6Q8 -1 15 6" stroke="#4a80c0" stroke-width="2.4" fill="none"/><path d="M3 7H13V13L8 15L3 13Z" fill="#3a78d0" stroke="#1a4a90" stroke-width="0.7"/><rect x="6" y="8" width="4" height="3" fill="#a0c0e0"/></svg>
<svg style="left:1190px;top:73px" width="16" height="16"><path d="M1 12L5 9H15L11 15H1Z" fill="#b8cce0" stroke="#4a6a90" stroke-width="0.7"/><path d="M4 1L13 11" stroke="#c03030" stroke-width="1.8"/><path d="M3 0L6 3" stroke="#802020" stroke-width="2"/><path d="M8 7L15 14" stroke="#6a8ab0" stroke-width="0.8"/></svg>
<svg style="left:1213px;top:73px" width="16" height="16"><rect x="6" y="0" width="5" height="15" rx="2" fill="#6a9ad0"/><path d="M0 8L6 5H15L10 9H0Z" fill="#2a78e0"/><path d="M2 10L6 13H12L15 10" fill="#3a7ad8"/></svg>
<svg style="left:1236px;top:73px" width="16" height="16"><path d="M1 6L5 3H9V15H1Z" fill="#2a78e0"/><path d="M6 3L10 0H15V12L11 15H6Z" fill="#60a8f0" stroke="#1a58b0" stroke-width="0.6"/><path d="M3 6v8M7 4v10M12 3v10" stroke="#a0d0ff" stroke-width="0.8"/></svg>
<svg style="left:1264px;top:73px" width="16" height="16"><rect x="1" y="4" width="13" height="11" fill="#2a80d0"/><rect x="3" y="6" width="6" height="7" fill="#e0f0ff"/><path d="M15 1L8 12" stroke="#403000" stroke-width="2.6"/><path d="M15 1L8 12" stroke="#f0d040" stroke-width="1.3"/></svg>
<svg style="left:42px;top:73px" width="16" height="16"><circle cx="6" cy="5.5" r="4.3" fill="url(#lf)" stroke="#406890" stroke-width="0.9"/><path d="M4 9.5L4.5 12H7.5L8 9.5Z" fill="#a8c0d8"/><rect x="4.3" y="12" width="3.4" height="3" fill="#c0c8d0" stroke="#404850" stroke-width="0.7"/></svg>
<svg style="left:56px;top:73px" width="16" height="16"><path d="M2 2l2 2M14 2l-2 2M2 14l2 -2M14 14l-2 -2" stroke="#d8d060" stroke-width="1.3"/><circle cx="8" cy="8" r="6.3" fill="#f0e040" stroke="#3a6a30" stroke-width="1.1"/></svg>
<svg style="left:72px;top:73px" width="16" height="16"><circle cx="6" cy="6" r="5.5" fill="#a8c0d0" stroke="#7090a8"/><circle cx="6" cy="6" r="2" fill="#e8d870"/><rect x="7.5" y="7.5" width="8" height="8" fill="#fff" stroke="#6080a0"/></svg>
<svg style="left:90px;top:73px" width="16" height="16"><path d="M2 7V4Q2 0.5 6 0.5Q10 0.5 10 4" stroke="#a8a800" stroke-width="1.8" fill="none"/><rect x="5" y="7" width="10" height="8.5" rx="1" fill="#e8e840" stroke="#909000" stroke-width="0.8"/><path d="M6 9.5h8M6 12h8" stroke="#b8b800" stroke-width="0.8"/></svg>
<svg style="left:107px;top:76px" width="10" height="10" shape-rendering="crispEdges"><rect x="0.5" y="0.5" width="9" height="9" fill="#fff" stroke="#000"/><rect x="1.5" y="1.5" width="7" height="7" fill="none" stroke="#000" stroke-width="0.4"/></svg>
<svg style="left:4px;top:108px" width="16" height="16"><path d="M2 14L14 2" stroke="#101010" stroke-width="1.3"/><rect x="0.5" y="12.5" width="3" height="3" fill="#1f58a8"/><rect x="12.5" y="0.5" width="3" height="3" fill="#1f58a8"/></svg>
<svg style="left:4px;top:130px" width="16" height="16"><path d="M1 15L15 1" stroke="#101010" stroke-width="1.3"/><path d="M0 16L1 11L5 15Z" fill="#101010"/><path d="M16 0L15 5L11 1Z" fill="#101010"/><rect x="6.5" y="6.5" width="3" height="3" fill="#1f58a8"/></svg>
<svg style="left:4px;top:152px" width="16" height="16"><path d="M2 12.5H10.5Q15 11 13 7Q12 4.5 10.5 4.5" stroke="#101010" stroke-width="1.2" fill="none"/><rect x="0.5" y="11.0" width="3" height="3" fill="#1f58a8"/><rect x="9.0" y="11.0" width="3" height="3" fill="#1f58a8"/><rect x="9.0" y="3.0" width="3" height="3" fill="#1f58a8"/></svg>
<svg style="left:4px;top:174px" width="16" height="16"><path d="M8 1.5L14.5 6.5L12 14H4L1.5 6.5Z" fill="url(#lf)" stroke="#101010" stroke-width="1.2"/></svg>
<svg style="left:4px;top:196px" width="16" height="16"><rect x="2" y="5" width="12" height="7" fill="url(#lf)" stroke="#101010" stroke-width="1.3"/><rect x="12.5" y="3.0" width="3" height="3" fill="#1f58a8"/><rect x="0.5" y="11.0" width="3" height="3" fill="#1f58a8"/></svg>
<svg style="left:4px;top:218px" width="16" height="16"><path d="M2.5 14Q3 4 14 2.5" stroke="#101010" stroke-width="1.3" fill="none"/><rect x="1.0" y="12.5" width="3" height="3" fill="#1f58a8"/><rect x="4.5" y="4.5" width="3" height="3" fill="#1f58a8"/><rect x="12.5" y="1.0" width="3" height="3" fill="#1f58a8"/></svg>
<svg style="left:4px;top:240px" width="16" height="16"><circle cx="8" cy="8" r="6.6" fill="url(#lf)" stroke="#101010" stroke-width="1.3"/><path d="M7 9L11 5" stroke="#101010"/><rect x="5.5" y="7.5" width="3" height="3" fill="#1f58a8"/></svg>
<svg style="left:4px;top:262px" width="16" height="16"><path d="M3.5 7.5Q0.5 6.5 1.5 3.5Q3 0.5 6.5 1.5Q9.5 0 11.5 2.5Q14 3 13.5 6.5Q16 9 14 11.5Q13.5 15 10 14Q7.5 16 5.5 13.5Q2 14 2.5 10.5Q1 8.5 3.5 7.5Z" fill="url(#lf)" stroke="#101010" stroke-width="1.4"/></svg>
<svg style="left:4px;top:284px" width="16" height="16"><path d="M1 14Q3 6 6 9Q9 12 11 7Q12 3 15 2" stroke="#101010" stroke-width="1.2" fill="none"/></svg>
<svg style="left:4px;top:306px" width="16" height="16"><ellipse cx="8" cy="8" rx="6.5" ry="4.2" fill="url(#lf)" stroke="#101010" stroke-width="1.4"/><rect x="6.5" y="2.0" width="3" height="3" fill="#1f58a8"/><rect x="0.0" y="6.5" width="3" height="3" fill="#1f58a8"/><rect x="13.0" y="6.5" width="3" height="3" fill="#1f58a8"/></svg>
<svg style="left:4px;top:328px" width="16" height="16"><path d="M2 7Q3 3 9 3Q15 3.5 14.5 7.5Q14 12 8 12" stroke="#101010" stroke-width="1.3" fill="none"/><rect x="0.5" y="5.5" width="3" height="3" fill="#1f58a8"/><rect x="6.5" y="10.5" width="3" height="3" fill="#1f58a8"/></svg>
<svg style="left:4px;top:350px" width="16" height="16"><path d="M5 0.5H12L15.5 4V13.5H5Z" fill="url(#lf)" stroke="#6080a8" stroke-width="0.8"/><rect x="1" y="3" width="8" height="6" fill="#f0f0a0" stroke="#1a3a70"/><circle cx="8" cy="10.5" r="3.8" fill="#d8e080" stroke="#1a3a70"/><path d="M16 12V16H12Z" fill="#000"/><rect x="0.0" y="7.5" width="3" height="3" fill="#1f58a8"/></svg>
<svg style="left:4px;top:372px" width="16" height="16"><rect x="1.5" y="1.5" width="9" height="7" fill="#f0f0a0" stroke="#1a3a70"/><circle cx="10" cy="10.5" r="4" fill="#d8e080" stroke="#1a3a70"/><rect x="0.0" y="7.0" width="3" height="3" fill="#1f58a8"/></svg>
<svg style="left:4px;top:394px" width="16" height="16"><rect x="6.5" y="6.5" width="3" height="3" fill="#1f58a8"/></svg>
<svg style="left:4px;top:416px" width="16" height="16"><rect x="3" y="3" width="10" height="10" fill="#fff"/><path d="M3 6L6 3M3 9L9 3M3 12L12 3M5 13L13 5M8 13L13 8" stroke="#404040" stroke-width="1.3"/><path d="M0 3H16M0 13H16M3 0V16M13 0V16" stroke="#1f58a8" stroke-width="1.4"/></svg>
<svg style="left:4px;top:438px" width="16" height="16"><path d="M0.5 0.5H9L15.5 6V14.5H0.5Z" fill="url(#lf)" stroke="#1a3a70" stroke-width="1.2"/><circle cx="6.5" cy="7.5" r="3" fill="none" stroke="#404860" stroke-width="1.2"/></svg>
<svg style="left:4px;top:460px" width="16" height="16"><path d="M2 15L7.5 1.5L13 15M4.5 10H10.5" stroke="#000" stroke-width="1.8" fill="none"/></svg>
<svg style="left:30px;top:108px" width="16" height="16"><path d="M0 13.5H16" stroke="#202020"/><path d="M3 10L12 1L15 4L6 13Z" fill="#f0d030" stroke="#806000" stroke-width="0.6"/><path d="M3 10L6 7L9 10L6 13Z" fill="#fff" stroke="#808080" stroke-width="0.5"/><circle cx="4.5" cy="11.5" r="2.2" fill="#d87070"/></svg>
<svg style="left:30px;top:130px" width="16" height="16"><circle cx="4" cy="4.5" r="3.3" fill="url(#mg)" stroke="#101010" stroke-width="1.1"/><circle cx="9.5" cy="11" r="3.3" fill="url(#mg)" stroke="#101010" stroke-width="1.1"/><circle cx="12" cy="12" r="3.3" fill="none" stroke="#101010" stroke-width="1.1"/><path d="M7 2Q12 0 13 5" stroke="#1a3a70" stroke-width="1.5" fill="none"/><path d="M10.5 4.5H15.5L13 7.5Z" fill="#1a3a70"/></svg>
<svg style="left:30px;top:152px" width="16" height="16"><path d="M6 3L1.5 14H6Z" fill="#fff" stroke="#101010" stroke-width="1.3"/><path d="M10 3L14.5 14H10Z" fill="#fff" stroke="#101010" stroke-width="1.3"/><path d="M8 0V16" stroke="#2a62b0" stroke-width="1.3"/></svg>
<svg style="left:30px;top:174px" width="16" height="16"><path d="M1 14V10Q1 7 5 7V4Q5 1 8 1Q11 1 11 4V7H15V14Z" fill="none" stroke="#101010" stroke-width="1.4"/><path d="M3.5 11.5V10.5Q3.5 9.5 6 9.5H7.5V4.5Q7.5 3.5 8.5 4.5V10H15V12H3.5" fill="#b0c8e8" stroke="#2a62b0"/></svg>
<svg style="left:30px;top:196px" width="16" height="16"><rect x="1.5" y="1.5" width="5" height="5" fill="url(#lf)" stroke="#101010" stroke-width="1.3"/><rect x="9.5" y="1.5" width="5" height="5" fill="url(#lf)" stroke="#101010" stroke-width="1.3"/><rect x="1.5" y="9.5" width="5" height="5" fill="url(#lf)" stroke="#101010" stroke-width="1.3"/><rect x="9.5" y="9.5" width="5" height="5" fill="url(#lf)" stroke="#101010" stroke-width="1.3"/></svg>
<svg style="left:30px;top:218px" width="16" height="16"><path d="M8 1V15M1 8H15" stroke="#2a5a98" stroke-width="2.2"/><path d="M8 0L11 4H5ZM8 16L11 12H5ZM0 8L4 5V11ZM16 8L12 5V11Z" fill="#2a5a98"/></svg>
<svg style="left:30px;top:240px" width="16" height="16"><path d="M4 3.5Q8 1 12 3.5Q15 6.5 14 10.5Q12 14.5 8 14.5Q3 14.5 2 9.5" stroke="#3a6090" stroke-width="2.2" fill="none"/><path d="M1 1L7 2L3 7Z" fill="#3a6090"/></svg>
<svg style="left:30px;top:262px" width="16" height="16"><rect x="0.5" y="0.5" width="15" height="15" fill="url(#lf)" stroke="#2a5a98"/><rect x="1" y="7" width="8" height="8" fill="#fff"/><path d="M1.5 7.5H8.5V15" fill="none" stroke="#000" stroke-dasharray="1 1" shape-rendering="crispEdges"/><path d="M1.5 8V15" stroke="#000" stroke-dasharray="1 1" shape-rendering="crispEdges"/></svg>
<svg style="left:30px;top:284px" width="16" height="16"><path d="M1 1H6V15H1Z" fill="#fff" stroke="#101010" stroke-width="1.3"/><path d="M7 1L15 15H7Z" fill="url(#lf)" stroke="#2a5a98" stroke-width="1.2"/><path d="M6 2V15" stroke="#000" stroke-dasharray="1 1"/></svg>
<svg style="left:30px;top:306px" width="16" height="16"><path d="M0 8H4M11 8h1M13 8h1M15 8h1" stroke="#101010" stroke-width="1.2"/><path d="M5 15L11 1" stroke="#2a62b0" stroke-width="1.4"/><path d="M6 8h1M8 8h1" stroke="#2a62b0" stroke-width="1.2"/></svg>
<svg style="left:30px;top:328px" width="16" height="16"><path d="M0 8H3M5 8h1M7 8h1M9 8h1" stroke="#101010" stroke-width="1.2"/><path d="M10 15L15 1" stroke="#2a62b0" stroke-width="1.4"/></svg>
<svg style="left:30px;top:350px" width="16" height="16"><rect x="1" y="3" width="14" height="10" fill="url(#lf)" stroke="#101010" stroke-width="1.3"/><rect x="6.5" y="1.5" width="3" height="3" fill="#1f58a8"/></svg>
<svg style="left:30px;top:372px" width="16" height="16"><path d="M3 3H1V14H15V3H13" fill="url(#lf)" stroke="#101010" stroke-width="1.3"/><rect x="2" y="2" width="12" height="2" fill="url(#lf)"/><rect x="2.5" y="1.5" width="3" height="3" fill="#1f58a8"/><rect x="10.5" y="1.5" width="3" height="3" fill="#1f58a8"/></svg>
<svg style="left:30px;top:394px" width="16" height="16"><path d="M1 15V6L6 1H15" stroke="#101010" stroke-width="1.3" fill="none"/><path d="M1 1H6M1 1V6" stroke="#101010" stroke-dasharray="1 1"/><path d="M1 7L7 1" stroke="#2a62b0" stroke-width="1.6"/></svg>
<svg style="left:30px;top:416px" width="16" height="16"><path d="M1 15V8Q1 1 8 1H15" stroke="#101010" stroke-width="1.3" fill="none"/><path d="M1 1H7M1 1V7" stroke="#101010" stroke-dasharray="1 1"/><path d="M2 9Q2 2 9 2" stroke="#2a62b0" stroke-width="1.8" fill="none"/></svg>
<svg style="left:30px;top:438px" width="16" height="16"><path d="M1 13L9 5L12 8L4 16Z" fill="#d02020"/><circle cx="6" cy="9" r="3" fill="#f0d040" opacity="0.8"/><path d="M1 6l1 1M3 4l1 1M9 12l1 1M11 10l1 1M5 3l1 0" stroke="#202020"/><path d="M10 6L14 2" stroke="#000" stroke-width="1.2"/><rect x="13" y="0" width="3" height="3" fill="#fff" stroke="#8090a0" stroke-width="0.5"/></svg>
<svg style="left:4px;top:501px" width="16" height="16"><path d="M9 9L14 14" stroke="#7a5424" stroke-width="2"/><circle cx="5.5" cy="5.5" r="5.2" fill="url(#mg)" stroke="#4a5258" stroke-width="1.2"/><g transform="translate(-1,-1)"><rect x="4.5" y="4.5" width="4.5" height="4.5" fill="#a8d0f0" stroke="#102850" stroke-width="1.4"/></g></svg>
<svg style="left:4px;top:522px" width="16" height="16"><path d="M9 9L14 14" stroke="#7a5424" stroke-width="2"/><circle cx="5.5" cy="5.5" r="5.2" fill="url(#mg)" stroke="#4a5258" stroke-width="1.2"/><g transform="translate(-1,-1)"><path d="M4 5.5V4H5.5M7.5 4H9V5.5M9 7.5V9H7.5M5.5 9H4V7.5" stroke="#102850" stroke-width="1.3" fill="none"/></g></svg>
<svg style="left:4px;top:544px" width="16" height="16"><path d="M9 9L14 14" stroke="#7a5424" stroke-width="2"/><circle cx="5.5" cy="5.5" r="5.2" fill="url(#mg)" stroke="#4a5258" stroke-width="1.2"/><g transform="translate(-1,-1)"><path d="M4 4L9 9M9 4L4 9" stroke="#1a3a70" stroke-width="1.7"/></g></svg>
<svg style="left:4px;top:567px" width="16" height="16"><path d="M9 9L14 14" stroke="#7a5424" stroke-width="2"/><circle cx="5.5" cy="5.5" r="5.2" fill="url(#mg)" stroke="#4a5258" stroke-width="1.2"/><g transform="translate(-1,-1)"><path d="M6.5 3V10M3 6.5H10M4 4l5 5M9 4l-5 5" stroke="#1a3a70" stroke-width="1"/></g></svg>
<svg style="left:4px;top:594px" width="16" height="16"><path d="M9 9L14 14" stroke="#7a5424" stroke-width="2"/><circle cx="5.5" cy="5.5" r="5.2" fill="url(#mg)" stroke="#4a5258" stroke-width="1.2"/><g transform="translate(-1,-1)"><path d="M6.5 3V10M3 6.5H10" stroke="#1a3a70" stroke-width="2"/></g></svg>
<svg style="left:4px;top:616px" width="16" height="16"><path d="M9 9L14 14" stroke="#7a5424" stroke-width="2"/><circle cx="5.5" cy="5.5" r="5.2" fill="url(#mg)" stroke="#4a5258" stroke-width="1.2"/><g transform="translate(-1,-1)"><path d="M3 6.5H10" stroke="#1a3a70" stroke-width="2"/></g></svg>
<svg style="left:4px;top:643px" width="16" height="16"><path d="M9 9L14 14" stroke="#7a5424" stroke-width="2"/><circle cx="5.5" cy="5.5" r="5.2" fill="url(#mg)" stroke="#4a5258" stroke-width="1.2"/><g transform="translate(-1,-1)"><path d="M4 3H8L9.5 4.5V10H4Z" fill="#fff" stroke="#1a3a70" stroke-width="1.1"/></g></svg>
<svg style="left:4px;top:665px" width="16" height="16"><path d="M9 9L14 14" stroke="#7a5424" stroke-width="2"/><circle cx="5.5" cy="5.5" r="5.2" fill="url(#mg)" stroke="#4a5258" stroke-width="1.2"/><g transform="translate(-1,-1)"><path d="M6.5 2.5V10.5M2.5 6.5H10.5" stroke="#1a3a70" stroke-width="1.4"/><path d="M6.5 1.5L8.5 3.5H4.5ZM6.5 11.5L8.5 9.5H4.5ZM1.5 6.5L3.5 4.5V8.5ZM11.5 6.5L9.5 4.5V8.5Z" fill="#1a3a70"/></g></svg>
<svg style="left:30px;top:478px" width="16" height="16"><path d="M0 4.5Q0.5 1.5 3.5 2L11 8.5L10 13L6.5 13.5Q2 12 0 8Z" fill="#e8a4a4"/><path d="M1.5 3L9 9.5M0.8 5.2L8 11M0.8 7.5L6.5 12" stroke="#c47878" stroke-width="0.8"/><path d="M9 11.5L12 9L15.5 12V15.5H9.5Z" fill="#1a4a90"/><path d="M8.5 11L11.5 8.5" stroke="#fff" stroke-width="1"/><path d="M12.5 0.5V6.5M9.5 3.5H15.5" stroke="#1a3a6a" stroke-width="1.2"/><path d="M11 1.8L12.5 0L14 1.8ZM11 5.2L12.5 7L14 5.2ZM10.8 2L9 3.5L10.8 5ZM14.2 2L16 3.5L14.2 5Z" fill="#1a3a6a"/></svg>
<svg style="left:30px;top:500px" width="16" height="16"><path d="M8.5 9L13.5 14.5" stroke="#9a6a28" stroke-width="2.2"/><circle cx="5.5" cy="5.5" r="5" fill="url(#mg)" stroke="#505860" stroke-width="1.1"/><path d="M12.5 2.5H16M14.2 0.5V4.5M12.5 6.5H16" stroke="#1a3060" stroke-width="1.2"/></svg>
<svg style="left:30px;top:522px" width="16" height="16"><circle cx="8" cy="9" r="5.5" fill="url(#gr)"/><path d="M1 14Q6 12 13 6" stroke="#d8e0f0" stroke-width="1.6" fill="none"/><circle cx="12.5" cy="5" r="3" fill="#f0e030" stroke="#a09000" stroke-width="0.6"/><path d="M12 0l1 2" stroke="#c0b000"/></svg>
<svg style="left:30px;top:544px" width="16" height="16"><circle cx="9" cy="7" r="5.5" fill="url(#gr)"/><circle cx="13" cy="4.5" r="2.8" fill="#f0e030" stroke="#a09000" stroke-width="0.6"/><path d="M7 9H12V14" fill="#fff"/><path d="M1 15L7 9" stroke="#1a3a70" stroke-width="1.8"/><path d="M4 8H9V13Z" fill="#1a3a70"/></svg>
<svg style="left:30px;top:566px" width="16" height="16"><rect x="0" y="6" width="4" height="8" fill="#202020"/><path d="M3 5L6 3L10 3L10 12H3Z" fill="#303030"/><circle cx="10" cy="9" r="2.6" fill="#fff" stroke="#202020" stroke-width="1.2"/><path d="M12 2Q16 6 13 13" stroke="#6080a0" stroke-width="1.3" fill="none"/><path d="M10 13l3 1.5l0 -3" fill="#6080a0"/></svg>
<svg style="left:30px;top:588px" width="16" height="16"><rect x="0" y="4" width="4" height="6" fill="#202020"/><path d="M3 3L6 1L10 1L10 9H3Z" fill="#303030"/><circle cx="10" cy="6" r="2.5" fill="#fff" stroke="#202020" stroke-width="1.2"/><rect x="0" y="11" width="11" height="3" fill="#d0a020" stroke="#806000" stroke-width="0.5"/><path d="M11 12.5H14" stroke="#1a3a70" stroke-width="1.6"/><path d="M13 9.5L16 12.5L13 15.5Z" fill="#1a3a70"/></svg>
<svg style="left:30px;top:610px" width="16" height="16"><path d="M2 9L8 7H15L10 11H1Z" fill="#c0d8f0" stroke="#2050a0" stroke-width="0.7"/><path d="M4 5L7 1H15V8L12 12H4Z" fill="#3070d0" stroke="#103080" stroke-width="0.7"/><path d="M2 10H10V14H2Z" fill="#a0c0e8" stroke="#2050a0" stroke-width="0.7"/><path d="M0 3L3 0M1 4l3 -3" stroke="#000"/><path d="M13 15L16 12" stroke="#000" stroke-width="1.1"/></svg>
<svg style="left:30px;top:632px" width="16" height="16"><rect x="0.5" y="2.5" width="13" height="13" fill="#d8a000" stroke="#805000"/><path d="M3 7L7 4H15V10L11 13H3Z" fill="#f0f0f0" stroke="#303030" stroke-width="0.9"/><path d="M3 7H11V13M11 7L15 4" stroke="#303030" stroke-width="0.9" fill="none"/></svg>
<svg style="left:30px;top:654px" width="16" height="16"><rect x="1.5" y="0.5" width="14" height="14" fill="#2a70d0" stroke="#1a4080"/><path d="M2 9L5 6H13V11L10 14H2Z" fill="#e0ecf8" stroke="#4a6a90" stroke-width="0.8"/><path d="M2 9H10V14M10 9L13 6" stroke="#4a6a90" stroke-width="0.8" fill="none"/></svg>
<svg style="left:0;top:0" width="1280" height="1024" shape-rendering="crispEdges">
<defs><linearGradient id="g1" x1="0" x2="1"><stop offset="0" stop-color="#5a2c00"/><stop offset="1" stop-color="#f0a050"/></linearGradient></defs>
<rect x="59" y="314" width="552" height="3" fill="#f5a85a"/>
<rect x="59" y="314" width="38" height="3" fill="url(#g1)"/>
<rect x="59" y="317" width="552" height="1" fill="#6a3400"/>
<rect x="96" y="314" width="1" height="3" fill="#7a3c00"/>
<rect x="132" y="314" width="1" height="3" fill="#7a3c00"/>
<rect x="222" y="314" width="1" height="3" fill="#7a3c00"/>
<rect x="59" y="342" width="50" height="10" fill="#6e3a08"/>
<rect x="109" y="342" width="56" height="2" fill="#502000"/>
<rect x="165" y="342" width="349" height="3" fill="#f5a85a"/>
<rect x="514" y="343" width="97" height="9" fill="#643200"/>
<rect x="579" y="318" width="32" height="25" fill="#2a1606"/>
<rect x="579" y="318" width="1" height="25" fill="#a05a20"/>
<rect x="59" y="352" width="552" height="3" fill="#fcb060"/>
<rect x="59" y="355" width="552" height="1" fill="#7a4000"/>
<rect x="59" y="468" width="552" height="1" fill="#d8a060"/>
<rect x="611" y="143" width="42" height="351" fill="#fff"/>
<rect x="664" y="340" width="194" height="3" fill="#f5a85a"/>
<rect x="664" y="343" width="194" height="1" fill="#6a3400"/>
</svg>
<svg style="left:0;top:0" width="1280" height="1024">
<path d="M856 341.5L1079 316.5L1140 316" stroke="#f0a050" stroke-width="3" fill="none"/>
<path d="M856 342.5L1079 317.8" stroke="#6a3400" stroke-width="0.8" fill="none"/>
<path d="M856 341.5L1056 351.8L1218 351.8" stroke="#f0a050" stroke-width="3" fill="none"/>
<path d="M856 343L1056 353.2L1218 353.2" stroke="#6a3400" stroke-width="0.8" fill="none"/>
<defs><linearGradient id="g2" x1="0" x2="1"><stop offset="0" stop-color="#7a3a00"/><stop offset="0.45" stop-color="#f8c070"/><stop offset="1" stop-color="#6a3000"/></linearGradient></defs>
<rect x="1079" y="314" width="139" height="4" fill="url(#g2)"/>
</svg>
<svg style="left:0;top:0" width="1280" height="1024" shape-rendering="crispEdges">
<rect x="663" y="461" width="554" height="1" fill="#d8a868"/>
<rect x="1217" y="152" width="40" height="333" fill="#fff"/>
</svg>
<svg style="left:0;top:0" width="1280" height="1024">
<g><rect x="90" y="473" width="2.4" height="30" fill="#38e038"/><path d="M86.5 482L91.2 468L95.8 482Z" fill="#2ed22e"/><rect x="91" y="502" width="23" height="2.4" fill="#f03a3a"/><path d="M112 498.5L126 503.2L112 507.8Z" fill="#e82020"/><circle cx="91" cy="503" r="4.2" fill="#1a68b0"/><path d="M93 461l3.5 4l3.5 -4M96.5 465v4.5" stroke="#40b040" fill="none" stroke-width="0.8"/><path d="M93 492h6l-6 6.5h6.5" stroke="#3a80d0" fill="none" stroke-width="0.9"/><path d="M123 492l7 6.5M130 492l-7 6.5" stroke="#c03030" fill="none" stroke-width="0.8"/></g>
<g><rect x="693" y="472" width="2.4" height="30" fill="#38e038"/><path d="M689.5 481L694.2 467L698.8 481Z" fill="#2ed22e"/><rect x="694" y="501" width="23" height="2.4" fill="#f03a3a"/><path d="M715 497.5L729 502.2L715 506.8Z" fill="#e82020"/><circle cx="694" cy="502" r="4.2" fill="#1a68b0"/><path d="M696 460l3.5 4l3.5 -4M699.5 464v4.5" stroke="#40b040" fill="none" stroke-width="0.8"/><path d="M696 491h6l-6 6.5h6.5" stroke="#3a80d0" fill="none" stroke-width="0.9"/><path d="M726 491l7 6.5M733 491l-7 6.5" stroke="#c03030" fill="none" stroke-width="0.8"/></g>
<g><rect x="693" y="916" width="2.4" height="30" fill="#38e038"/><path d="M689.5 925L694.2 911L698.8 925Z" fill="#2ed22e"/><rect x="694" y="945" width="23" height="2.4" fill="#f03a3a"/><path d="M715 941.5L729 946.2L715 950.8Z" fill="#e82020"/><circle cx="694" cy="946" r="4.2" fill="#1a68b0"/><path d="M696 904l3.5 4l3.5 -4M699.5 908v4.5" stroke="#40b040" fill="none" stroke-width="0.8"/><path d="M696 935h6l-6 6.5h6.5" stroke="#3a80d0" fill="none" stroke-width="0.9"/><path d="M726 935l7 6.5M733 935l-7 6.5" stroke="#c03030" fill="none" stroke-width="0.8"/></g>
<path d="M90.8 946L90.8 928" stroke="#2a90e0" stroke-width="2.2"/><path d="M87 931L90.8 918.5L94.6 931Z" fill="#2a90e0"/>
<path d="M90 946L74 936" stroke="#30e030" stroke-width="2.2"/><path d="M67 932L79 932.5L75 939.5Z" fill="#20d020"/>
<path d="M91.5 946L107 936" stroke="#f02020" stroke-width="2.2"/><path d="M115 932L103 932.5L107 939.5Z" fill="#e81818"/>
<path d="M94.5 907.5h7l-7 6.5h7" stroke="#3a90e0" fill="none" stroke-width="0.9"/>
<path d="M76 920.5l3.5 4l3.5 -4M79.5 924.5v3" stroke="#40c040" fill="none" stroke-width="0.8"/>
<path d="M116 920.5l7 6.5M123 920.5l-7 6.5" stroke="#c03030" fill="none" stroke-width="0.8"/>
</svg>
<svg style="left:0;top:0" width="1280" height="1024" shape-rendering="crispEdges">
<rect x="731" y="575" width="427" height="403" fill="#f7b470"/>
<rect x="875" y="575" width="236" height="23" fill="#ffe48e"/>
<rect x="875" y="598" width="165" height="48" fill="#e2a062"/>
<rect x="1111" y="575" width="47" height="284" fill="#fcc377"/>
<rect x="885" y="942" width="155" height="36" fill="#e2a062"/>
</svg>
<svg style="left:0;top:0" width="1280" height="1024">
<path d="M802 646H1040V942H885L802 902Z" fill="#000"/>
<path d="M1111 859 L1079.4 877.3 A54 54 0 1 0 1158 940.2 L1158 859Z" fill="#fcc377" stroke="#8c4a10" stroke-width="1"/>
<path d="M1134.7 859 L1084 889.4 A41.6 41.6 0 1 0 1146.2 917 Z" fill="#f7b470" stroke="#8c4a10" stroke-width="1"/>
<path d="M1135 859.5H1158V925H1146.4Z" fill="#fcc377"/>
</svg>
<svg style="left:0;top:0" width="1280" height="1024" shape-rendering="crispEdges">
<path d="M731.5 575.5H1158.5V978.5H731.5Z" fill="none" stroke="#8c4a10"/>
<path d="M802.5 575.5V646.5H1040.5V978.5" fill="none" stroke="#8c4a10"/>
<path d="M875.5 575.5V646.5" fill="none" stroke="#8c4a10"/>
<path d="M875.5 598.5H1111.5V859.5H1158.5" fill="none" stroke="#8c4a10"/>
<path d="M1111.5 575.5V598.5" fill="none" stroke="#8c4a10"/>
<path d="M885.5 942.5V978.5" fill="none" stroke="#8c4a10"/>
<path d="M1146.5 925.5H1158.5" fill="none" stroke="#8c4a10"/>
</svg>
<svg style="left:0;top:0" width="1280" height="1024">
<path d="M1134.7 859 L1146.2 925" stroke="#8c4a10" fill="none"/>
<path d="M802 902.5L885 942.5" stroke="#8c4a10" fill="none"/>
<path d="M802 681.5H837.5L878.5 647" stroke="#f0bc7c" fill="none" stroke-width="1"/>
<path d="M802 705.5H850.5L919 647" stroke="#f0bc7c" fill="none" stroke-width="1"/>
<rect x="984.5" y="893.5" width="39" height="12" fill="none" stroke="#f0bc7c"/>
<text x="986" y="903.5" font-family="Liberation Mono" font-size="10" fill="#f0bc7c" letter-spacing="-0.6">+23 cm</text>
<path d="M1023 905.5L1040 908" stroke="#f0bc7c" fill="none"/>
</svg>
<svg style="left:0;top:0" width="1280" height="1024" shape-rendering="crispEdges"><rect x="1158" y="545" width="30" height="31" fill="#fff"/></svg>
<svg style="left:0;top:0" width="1280" height="1024">
<path d="M133.0 842.0 L362.0 693.0 L578.4 834.8 L349.7 966.8 Z" stroke="#f8c448" stroke-width="1" fill="none"/>
<path d="M171.1 817.2 L346.9 920.8 L412.8 907.5 L498.5 857.5" stroke="#f8c448" stroke-width="1" fill="none"/>
<path d="M308.8 943.3 L346.9 920.8" stroke="#f8c448" stroke-width="1" fill="none"/>
<path d="M221.7 893.1 L259.8 869.5" stroke="#f8c448" stroke-width="1" fill="none"/>
<path d="M412.8 907.5 L425.7 915.3 L543.0 850.0" stroke="#f8c448" stroke-width="1" fill="none"/>
<path d="M552.1 821.6 L555.5 824.1 L558.4 826.8 L560.7 829.8 L562.3 832.8 L563.3 836.0 L563.7 839.2 L563.4 842.3 L562.4 845.4 L560.7 848.3 L558.4 851.1 L555.6 853.6 L552.2 855.8 L548.3 857.8 L544.0 859.4 L539.4 860.6 L534.5 861.5 L529.4 861.9 L524.3 862.0 L519.1 861.6 L514.1 860.8 L509.2 859.7 L504.6 858.2 L500.3 856.3 L496.4 854.1 L493.0 851.7 L490.1 849.0 L487.8 846.1 L486.2 843.1 L485.1 839.9 L484.8 836.8 L485.1 833.6 L486.1 830.5 L487.8 827.5 L490.1 824.7 L492.9 822.2 L496.3 819.8 L500.2 817.8 L504.5 816.2 L509.1 814.9 L514.0 814.0 L519.0 813.5 L524.2 813.5 L529.3 813.8 L534.4 814.6 L539.3 815.8 L543.9 817.4 L548.2 819.3 L552.1 821.6" stroke="#f8c448" stroke-width="1" fill="none"/>
<path d="M546.5 824.8 L549.2 826.8 L551.5 829.0 L553.3 831.4 L554.6 833.8 L555.4 836.4 L555.7 838.9 L555.5 841.4 L554.7 843.9 L553.3 846.2 L551.5 848.4 L549.2 850.4 L546.5 852.2 L543.4 853.8 L540.0 855.0 L536.3 856.0 L532.4 856.7 L528.4 857.1 L524.3 857.1 L520.2 856.8 L516.1 856.2 L512.2 855.3 L508.5 854.1 L505.1 852.6 L502.0 850.9 L499.3 848.9 L497.0 846.7 L495.2 844.4 L493.8 842.0 L493.0 839.5 L492.8 837.0 L493.0 834.4 L493.8 832.0 L495.1 829.6 L497.0 827.4 L499.2 825.3 L502.0 823.5 L505.0 821.9 L508.5 820.6 L512.2 819.5 L516.1 818.8 L520.1 818.5 L524.2 818.4 L528.3 818.7 L532.4 819.3 L536.3 820.3 L539.9 821.5 L543.4 823.1 L546.5 824.8" stroke="#f8c448" stroke-width="1" fill="none"/>
<path d="M232.9 860.2 L243.6 853.4" stroke="#f8c448" stroke-width="1" fill="none"/>
<path d="M270.5 882.3 L281.3 875.7" stroke="#f8c448" stroke-width="1" fill="none"/>
<path d="M308.2 904.4 L318.9 897.9" stroke="#f8c448" stroke-width="1" fill="none"/>
<path d="M420 909 l8 -1 M420 909 l5 5" stroke="#f8c448" stroke-width="1" fill="none"/>
<path d="M360 934 l20 -10 l3 3 l-20 10z" stroke="#f8c448" stroke-width="0.9" fill="none"/><path d="M364 933 l4 -2 M372 929 l4 -2" stroke="#f8c448" stroke-width="1.6"/>
<path d="M442 861 l20 -10 l3 3 l-20 10z" stroke="#f8c448" stroke-width="0.9" fill="none"/><path d="M446 860 l4 -2 M454 856 l4 -2" stroke="#f8c448" stroke-width="1.6"/>
<path d="M510 838 l20 -10 l3 3 l-20 10z" stroke="#f8c448" stroke-width="0.9" fill="none"/><path d="M514 837 l4 -2 M522 833 l4 -2" stroke="#f8c448" stroke-width="1.6"/>
<circle cx="472" cy="853" r="1.5" fill="#f8c448"/><circle cx="503" cy="865" r="1.5" fill="#f8c448"/>
<path d="M362 641 L578.5 782.6 L349.7 911 L133 785.8 Z M213 786.4 L347 862.7 L420 844.4 L492.6 808.3 L336.6 719.7 Z" fill="#8a4603" fill-rule="evenodd"/>
<path d="M362 641 L549.4 747.4 Q562 752 561.6 764 Q561 790 517 790 Q481 789 481 763 Q482 751 488.4 744.4 L349 664 L226 747 L212.5 742 L208 738.4 Z" fill="#a85808"/>
<path d="M502.7 738.3 L550.4 764.7 Q550 782.5 517 782.5 Q491.5 782 491.5 763 Q492 748 502.7 738.3Z" fill="#8c4700"/>
<path d="M503 738.3 L551 762.5 L550.4 766 L509 742 Z" fill="#000"/>
<path d="M226 747 L349 664" stroke="#4a2000" stroke-width="0.8" fill="none"/>
<path d="M561.3 758 Q562 788 522 790 Q500 790 490 784" stroke="#3a1600" stroke-width="0.7" stroke-dasharray="1.5 1.2" fill="none"/>
<defs><clipPath id="holeclip"><path d="M213 786.4 L336.6 719.7 L492.6 808.3 L420 844.4 L347 862.7Z"/></clipPath></defs><g clip-path="url(#holeclip)">
<path d="M200 803.8 L340 723.6" stroke="#f8c448" stroke-width="1" fill="none"/>
<path d="M200 811.9 L347 727.7" stroke="#f8c448" stroke-width="1" fill="none"/>
<path d="M200 819.2 L353.3 731.4" stroke="#f8c448" stroke-width="1" fill="none"/>
<path d="M200 826.5 L359.6 735" stroke="#f8c448" stroke-width="1" fill="none"/>
<path d="M335 720.7 L500 816.5" stroke="#f8c448" stroke-width="1" fill="none"/>
<path d="M298.4 747.5 L446 831.9" stroke="#f8c448" stroke-width="1" fill="none"/>
<path d="M258.6 813 L336 770.5" stroke="#f8c448" stroke-width="1" fill="none"/>
<path d="M375.8 790.8 L419 766.2" stroke="#f8c448" stroke-width="1" fill="none"/>
<path d="M443.7 831.9 L489.4 808.4" stroke="#f8c448" stroke-width="1" fill="none"/>
</g>
<circle cx="305" cy="751" r="1.8" fill="#f8c448"/><circle cx="318" cy="758.5" r="1.8" fill="#f8c448"/>
<path d="M331 759 l12 -6.5 l5 3 l-12 6.5z" stroke="#f8c448" stroke-width="0.8" fill="none"/>
<path d="M346 555 L362.6 562 L362.6 649 L346 649Z" fill="#d0d0d0"/>
<path d="M362.6 562 L379 555 L379 649 L362.6 649Z" fill="#505050"/>
<path d="M346 555 L362.6 545 L379 555 L362.6 562Z" fill="#fff"/>
<path d="M346.4 555 V649 M378.6 555 V649" stroke="#f0f0f0" stroke-width="0.8"/>
<path d="M335 658.5 L362 641 L390 659 Z" fill="#a85808"/>
</svg>
<svg style="left:0;top:0" width="1280" height="1024" shape-rendering="crispEdges">
<rect x="55.5" y="97.5" width="601" height="442" fill="none" stroke="#fff"/>
<rect x="658.5" y="97.5" width="602" height="442" fill="none" stroke="#fff"/>
<rect x="55.5" y="541.5" width="601" height="441" fill="none" stroke="#fff"/>
<rect x="658" y="541" width="603" height="442" fill="none" stroke="#fff" stroke-width="2"/>
</svg></body></html>
